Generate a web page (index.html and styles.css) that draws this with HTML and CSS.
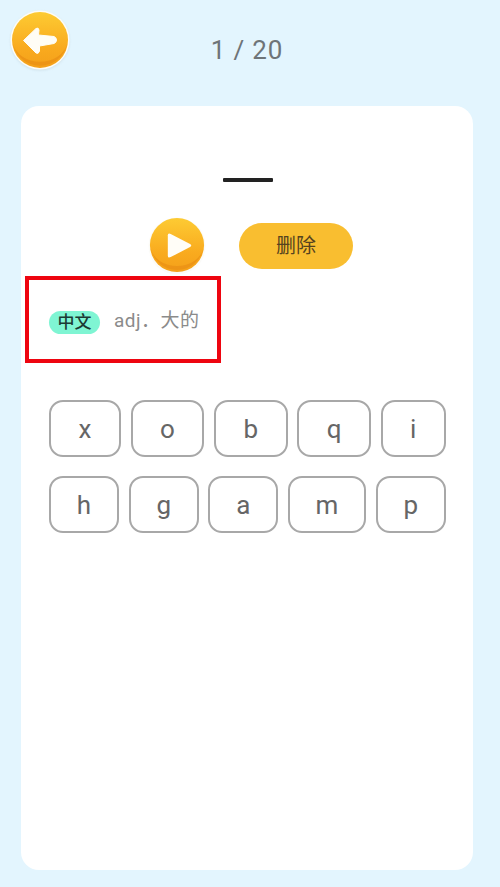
FILE: index.html
```html
<!DOCTYPE html>
<html lang="zh-CN">

<head>
    <meta charset="UTF-8">
    <meta name="viewport" content="width=device-width, initial-scale=1.0">
    <title>拼写</title>
    <link rel="stylesheet" href="styles.css">
</head>

<body>
    <div class="page">
        <div class="header">
            <svg class="back" viewBox="0 0 60 60">
                <defs>
                    <linearGradient id="backFill" x1="0" y1="0" x2="0" y2="1">
                        <stop offset="0" stop-color="#fdcb33"/>
                        <stop offset="0.65" stop-color="#f9aa1e"/>
                        <stop offset="1" stop-color="#f4a01a"/>
                    </linearGradient>
                </defs>
                <circle cx="30" cy="30" r="29.500" fill="#fdfcf6"/>
                <circle cx="30" cy="30" r="28" fill="url(#backFill)"/>
                <path d="M2.500 33a28 28 0 0 0 55 0a28 23 0 0 1-55 0z" fill="#e98f14" opacity="0.7"/>
                <path d="M13.500 30.500L26 18.500Q28.500 17 29 20L28.500 25L44 26.500Q46.500 27.500 46.500 30Q46.500 32.500 44 33.500L29.500 36L29.500 41Q28.500 44.500 26 43Z" fill="#fffdf5" stroke="#fffdf5" stroke-width="1" stroke-linejoin="round"/>
            </svg>
            <div class="count">1 / 20</div>
        </div>

        <div class="card">
            <div class="blank"></div>

            <div class="actions">
                <svg class="play" viewBox="0 0 60 60">
                    <defs>
                        <linearGradient id="playFill" x1="0" y1="0" x2="0" y2="1">
                            <stop offset="0" stop-color="#fdcb33"/>
                            <stop offset="0.65" stop-color="#f9aa1e"/>
                            <stop offset="1" stop-color="#f4a01a"/>
                        </linearGradient>
                    </defs>
                    <circle cx="30" cy="30" r="29.500" fill="#fbfbf8"/>
                    <circle cx="30" cy="29" r="28" fill="url(#playFill)"/>
                    <path d="M2.500 32a28 28 0 0 0 55 0a28 23 0 0 1-55 0z" fill="#e98f14" opacity="0.7"/>
                    <path d="M20.500 19Q20.500 16 23.500 17.500L43.500 28Q46 29.500 43.500 31L23.500 41.500Q20.500 43 20.500 40Z" fill="#fffdf7"/>
                </svg>
                <div class="delete">删除</div>
            </div>

            <div class="meaning">
                <span class="tag">中文</span>
                <span class="desc">adj．大的</span>
                <div class="highlight"></div>
            </div>

            <div class="keys">
                <div class="key">x</div>
                <div class="key">o</div>
                <div class="key">b</div>
                <div class="key">q</div>
                <div class="key">i</div>
                <div class="key">h</div>
                <div class="key">g</div>
                <div class="key">a</div>
                <div class="key">m</div>
                <div class="key">p</div>
            </div>
        </div>
    </div>
</body>

</html>
```

FILE: styles.css
```css
* {
    box-sizing: border-box;
}

body {
    margin: 0;
    font-family: Roboto, "Noto Sans CJK SC", sans-serif;
}

.page {
    display: flex;
    flex-direction: column;
    height: 887px;
    padding: 0 27px 17px 21px;
    background-color: #e3f5fe;
}

.header {
    display: grid;
    grid-template-columns: 1fr auto 1fr;
    align-items: start;
    flex: 0 0 106px;
}

.back {
    display: block;
    width: 60px;
    height: 60px;
    margin: 10px 0 0 -11px;
    filter: drop-shadow(0 1px 1px rgba(150, 170, 180, 0.25));
}

.count {
    margin-top: 35px;
    font-size: 26px;
    line-height: 30px;
    letter-spacing: 0.8px;
    color: #6e7478;
}

.card {
    flex: 1;
    display: flex;
    flex-direction: column;
    padding: 72px 27px 0 28px;
    background-color: #fff;
    border-radius: 18px;
}

.blank {
    align-self: center;
    width: 50px;
    height: 4px;
    background-color: #222;
    border-radius: 1px;
}

.actions {
    display: flex;
    align-items: center;
    justify-content: center;
    gap: 33px;
    margin-top: 35px;
    padding-left: 6px;
}

.play {
    display: block;
    width: 58px;
    height: 58px;
}

.delete {
    width: 114px;
    height: 46px;
    line-height: 46px;
    text-align: center;
    font-size: 20px;
    color: #56431f;
    background-color: #f9be30;
    border-radius: 23px;
}

.meaning {
    position: relative;
    display: flex;
    align-items: center;
    gap: 14px;
    margin-top: 35px;
    height: 25px;
}

.tag {
    width: 51px;
    height: 23px;
    line-height: 23px;
    text-align: center;
    font-size: 17px;
    font-weight: 500;
    color: #1c3a34;
    background-color: #7ff5d3;
    border-radius: 12px;
}

.desc {
    margin-bottom: 4px;
    font-size: 19px;
    line-height: 22px;
    letter-spacing: 0.5px;
    color: #8b8b8b;
}

.highlight {
    position: absolute;
    left: -24px;
    top: -34px;
    width: 196px;
    height: 87px;
    border: 4px solid #ee0510;
}

.keys {
    display: flex;
    flex-wrap: wrap;
    gap: 19px 9.500px;
    margin-top: 65px;
}

.key {
    flex: 1 1 auto;
    height: 57px;
    padding: 0 25px;
    line-height: 55px;
    text-align: center;
    font-size: 26px;
    color: #666;
    border: 2px solid #a8a8a8;
    border-radius: 14px;
}
```
